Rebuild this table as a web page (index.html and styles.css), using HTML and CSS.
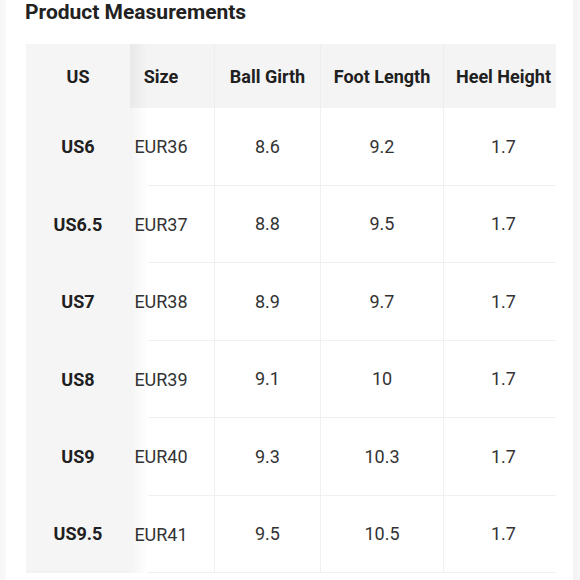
FILE: index.html
```html
<!DOCTYPE html>
<html>
<head>
<meta charset="utf-8">
<link rel="stylesheet" href="styles.css">
</head>
<body>
<div class="page">
  <div class="edge edge-left"></div>
  <main class="content">
    <h2 class="title">Product Measurements</h2>
    <div class="table">
      <div class="cell head sticky">US</div>
      <div class="cell head size">Size</div>
      <div class="cell head line">Ball Girth</div>
      <div class="cell head line">Foot Length</div>
      <div class="cell head line heel">Heel Height</div>

      <div class="cell sticky bold">US6</div>
      <div class="cell size body">EUR36</div>
      <div class="cell line body">8.6</div>
      <div class="cell line body">9.2</div>
      <div class="cell line body heel">1.7</div>

      <div class="cell sticky bold">US6.5</div>
      <div class="cell size body">EUR37</div>
      <div class="cell line body">8.8</div>
      <div class="cell line body">9.5</div>
      <div class="cell line body heel">1.7</div>

      <div class="cell sticky bold">US7</div>
      <div class="cell size body">EUR38</div>
      <div class="cell line body">8.9</div>
      <div class="cell line body">9.7</div>
      <div class="cell line body heel">1.7</div>

      <div class="cell sticky bold">US8</div>
      <div class="cell size body">EUR39</div>
      <div class="cell line body">9.1</div>
      <div class="cell line body">10</div>
      <div class="cell line body heel">1.7</div>

      <div class="cell sticky bold">US9</div>
      <div class="cell size body">EUR40</div>
      <div class="cell line body">9.3</div>
      <div class="cell line body">10.3</div>
      <div class="cell line body heel">1.7</div>

      <div class="cell sticky bold last">US9.5</div>
      <div class="cell size body">EUR41</div>
      <div class="cell line body">9.5</div>
      <div class="cell line body">10.5</div>
      <div class="cell line body heel">1.7</div>
    </div>
  </main>
  <div class="edge edge-right"></div>
</div>
</body>
</html>
```

FILE: styles.css
```css
* { box-sizing: border-box; }

html, body {
  margin: 0;
  padding: 0;
  background: #ffffff;
}

body {
  font-family: Roboto, "Liberation Sans", Arial, sans-serif;
  color: #333333;
}

.page {
  display: flex;
  width: 580px;
  height: 580px;
  overflow: hidden;
}

.edge {
  flex: 0 0 auto;
  height: 100%;
}

.edge-left {
  width: 6px;
  background: linear-gradient(to right, #f7f7f7, #fafafa);
}

.edge-right {
  width: 7px;
  background: linear-gradient(to right, #f3f3f3, #f7f7f7);
}

.content {
  flex: 1 1 auto;
  padding-left: 19px;
}

.title {
  margin: 0;
  height: 44px;
  font-size: 21px;
  line-height: 25px;
  font-weight: 700;
  color: #222222;
}

.table {
  margin-left: 1px;
  width: 530px;
  display: grid;
  grid-template-columns: 104px 84px 106px 123px 113px;
  grid-template-rows: 64px repeat(6, 77.5px);
  font-size: 18px;
}

.cell {
  display: flex;
  align-items: center;
  justify-content: center;
  border-bottom: 1px solid #f0f0f0;
}

.head {
  background: #f4f4f4;
  font-weight: 700;
  color: #202020;
  border-bottom: none;
}

.sticky {
  background: #f5f5f5;
  border-bottom: none;
}

.sticky.last {
  border-bottom: 2px solid #f3f3f3;
}

.bold {
  font-weight: 700;
  color: #202020;
}

.size {
  padding-right: 22px;
  border-bottom: none;
}

.size.body {
  background:
    linear-gradient(#f0f0f0, #f0f0f0) no-repeat right bottom / calc(100% - 18px) 1px,
    linear-gradient(to right, #f4f4f4, #ffffff 18px);
}

.size.head {
  background: linear-gradient(to right, #e9e9e9, #f4f4f4 18px);
}

.line {
  border-left: 1px solid #f0f0f0;
}

.head.line {
  border-left: 1px solid #eeeeee;
}

.heel {
  padding-left: 7px;
}

.body {
  color: #333333;
}
```
